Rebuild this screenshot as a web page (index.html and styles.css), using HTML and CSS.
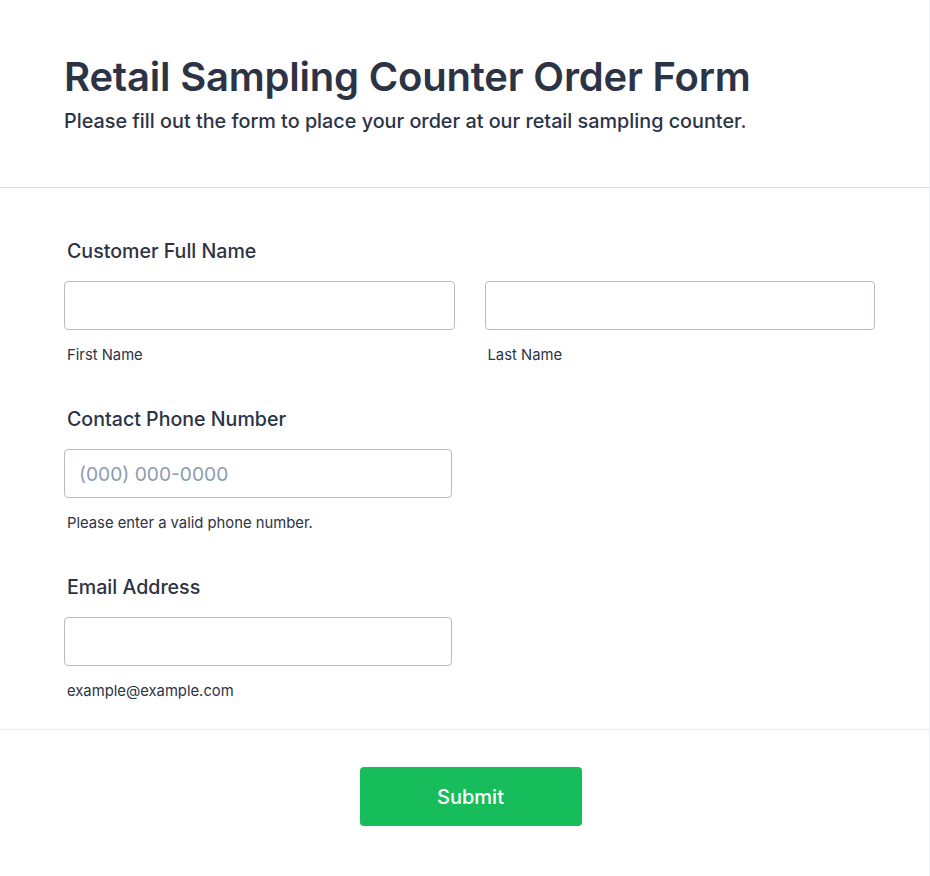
FILE: index.html
```html
<!DOCTYPE html>
<html lang="en">
<head>
<meta charset="utf-8">
<title>Retail Sampling Counter Order Form</title>
<link rel="stylesheet" href="styles.css">
</head>
<body>
<div class="card">
  <header class="head">
    <h1 class="title">Retail Sampling Counter Order Form</h1>
    <p class="subtitle">Please fill out the form to place your order at our retail sampling counter.</p>
  </header>
  <main class="body">
    <section class="field">
      <label class="label">Customer Full Name</label>
      <div class="row">
        <div class="col">
          <input class="input" type="text">
          <span class="sub">First Name</span>
        </div>
        <div class="col">
          <input class="input" type="text">
          <span class="sub">Last Name</span>
        </div>
      </div>
    </section>
    <section class="field">
      <label class="label">Contact Phone Number</label>
      <div class="col narrow">
        <input class="input" type="text" placeholder="(000) 000-0000">
        <span class="sub">Please enter a valid phone number.</span>
      </div>
    </section>
    <section class="field">
      <label class="label">Email Address</label>
      <div class="col narrow">
        <input class="input" type="text">
        <span class="sub">example@example.com</span>
      </div>
    </section>
  </main>
  <footer class="foot">
    <button class="submit" type="button">Submit</button>
  </footer>
</div>
</body>
</html>
```
FILE: styles.css
```css
* { box-sizing: border-box; }
html, body { margin: 0; padding: 0; background: #ffffff; }
body {
  font-family: Inter, "Noto Sans", "Liberation Sans", sans-serif;
  color: #2c3345;
}
.card {
  width: 930px;
  min-height: 876px;
  background: #fff;
  border-right: 1px solid #eef0f4;
}
.head {
  padding: 53px 54px 52px 64px;
  border-bottom: 1px solid #dcdce8;
}
.title {
  margin: 0;
  font-size: 40px;
  line-height: 48px;
  font-weight: 600;
  letter-spacing: -0.2px;
}
.subtitle {
  margin: 7px 0 0;
  font-size: 19.8px;
  line-height: 27px;
  font-weight: 500;
}
.body {
  padding: 50px 54px 28px 64px;
  border-bottom: 1px solid #eaebf0;
  display: flex;
  flex-direction: column;
  gap: 41px;
}
.field { display: flex; flex-direction: column; }
.label {
  font-size: 19.6px;
  line-height: 26px;
  font-weight: 500;
  padding-left: 3px;
  margin-bottom: 17px;
}
.row { display: flex; gap: 30px; }
.col { display: flex; flex-direction: column; flex: 1; }
.col.narrow { width: 388px; flex: none; }
.input {
  height: 49px;
  width: 100%;
  border: 1px solid #b8bdc9;
  border-radius: 4px;
  padding: 0 14px;
  font-family: inherit;
  font-size: 19.2px;
  color: #2c3345;
  background: #fff;
  outline: none;
}
.input::placeholder { color: #8d9bb0; }
.sub {
  margin-top: 15px;
  padding-left: 3px;
  font-size: 14.8px;
  line-height: 20px;
  color: #2c3345;
}
.foot {
  display: flex;
  justify-content: center;
  padding: 37px 54px 50px 66px;
}
.submit {
  width: 222px;
  height: 59px;
  border: none;
  border-radius: 4px;
  background: #18bd5b;
  color: #fff;
  font-family: inherit;
  font-size: 20px;
  font-weight: 500;
  cursor: pointer;
}
```
